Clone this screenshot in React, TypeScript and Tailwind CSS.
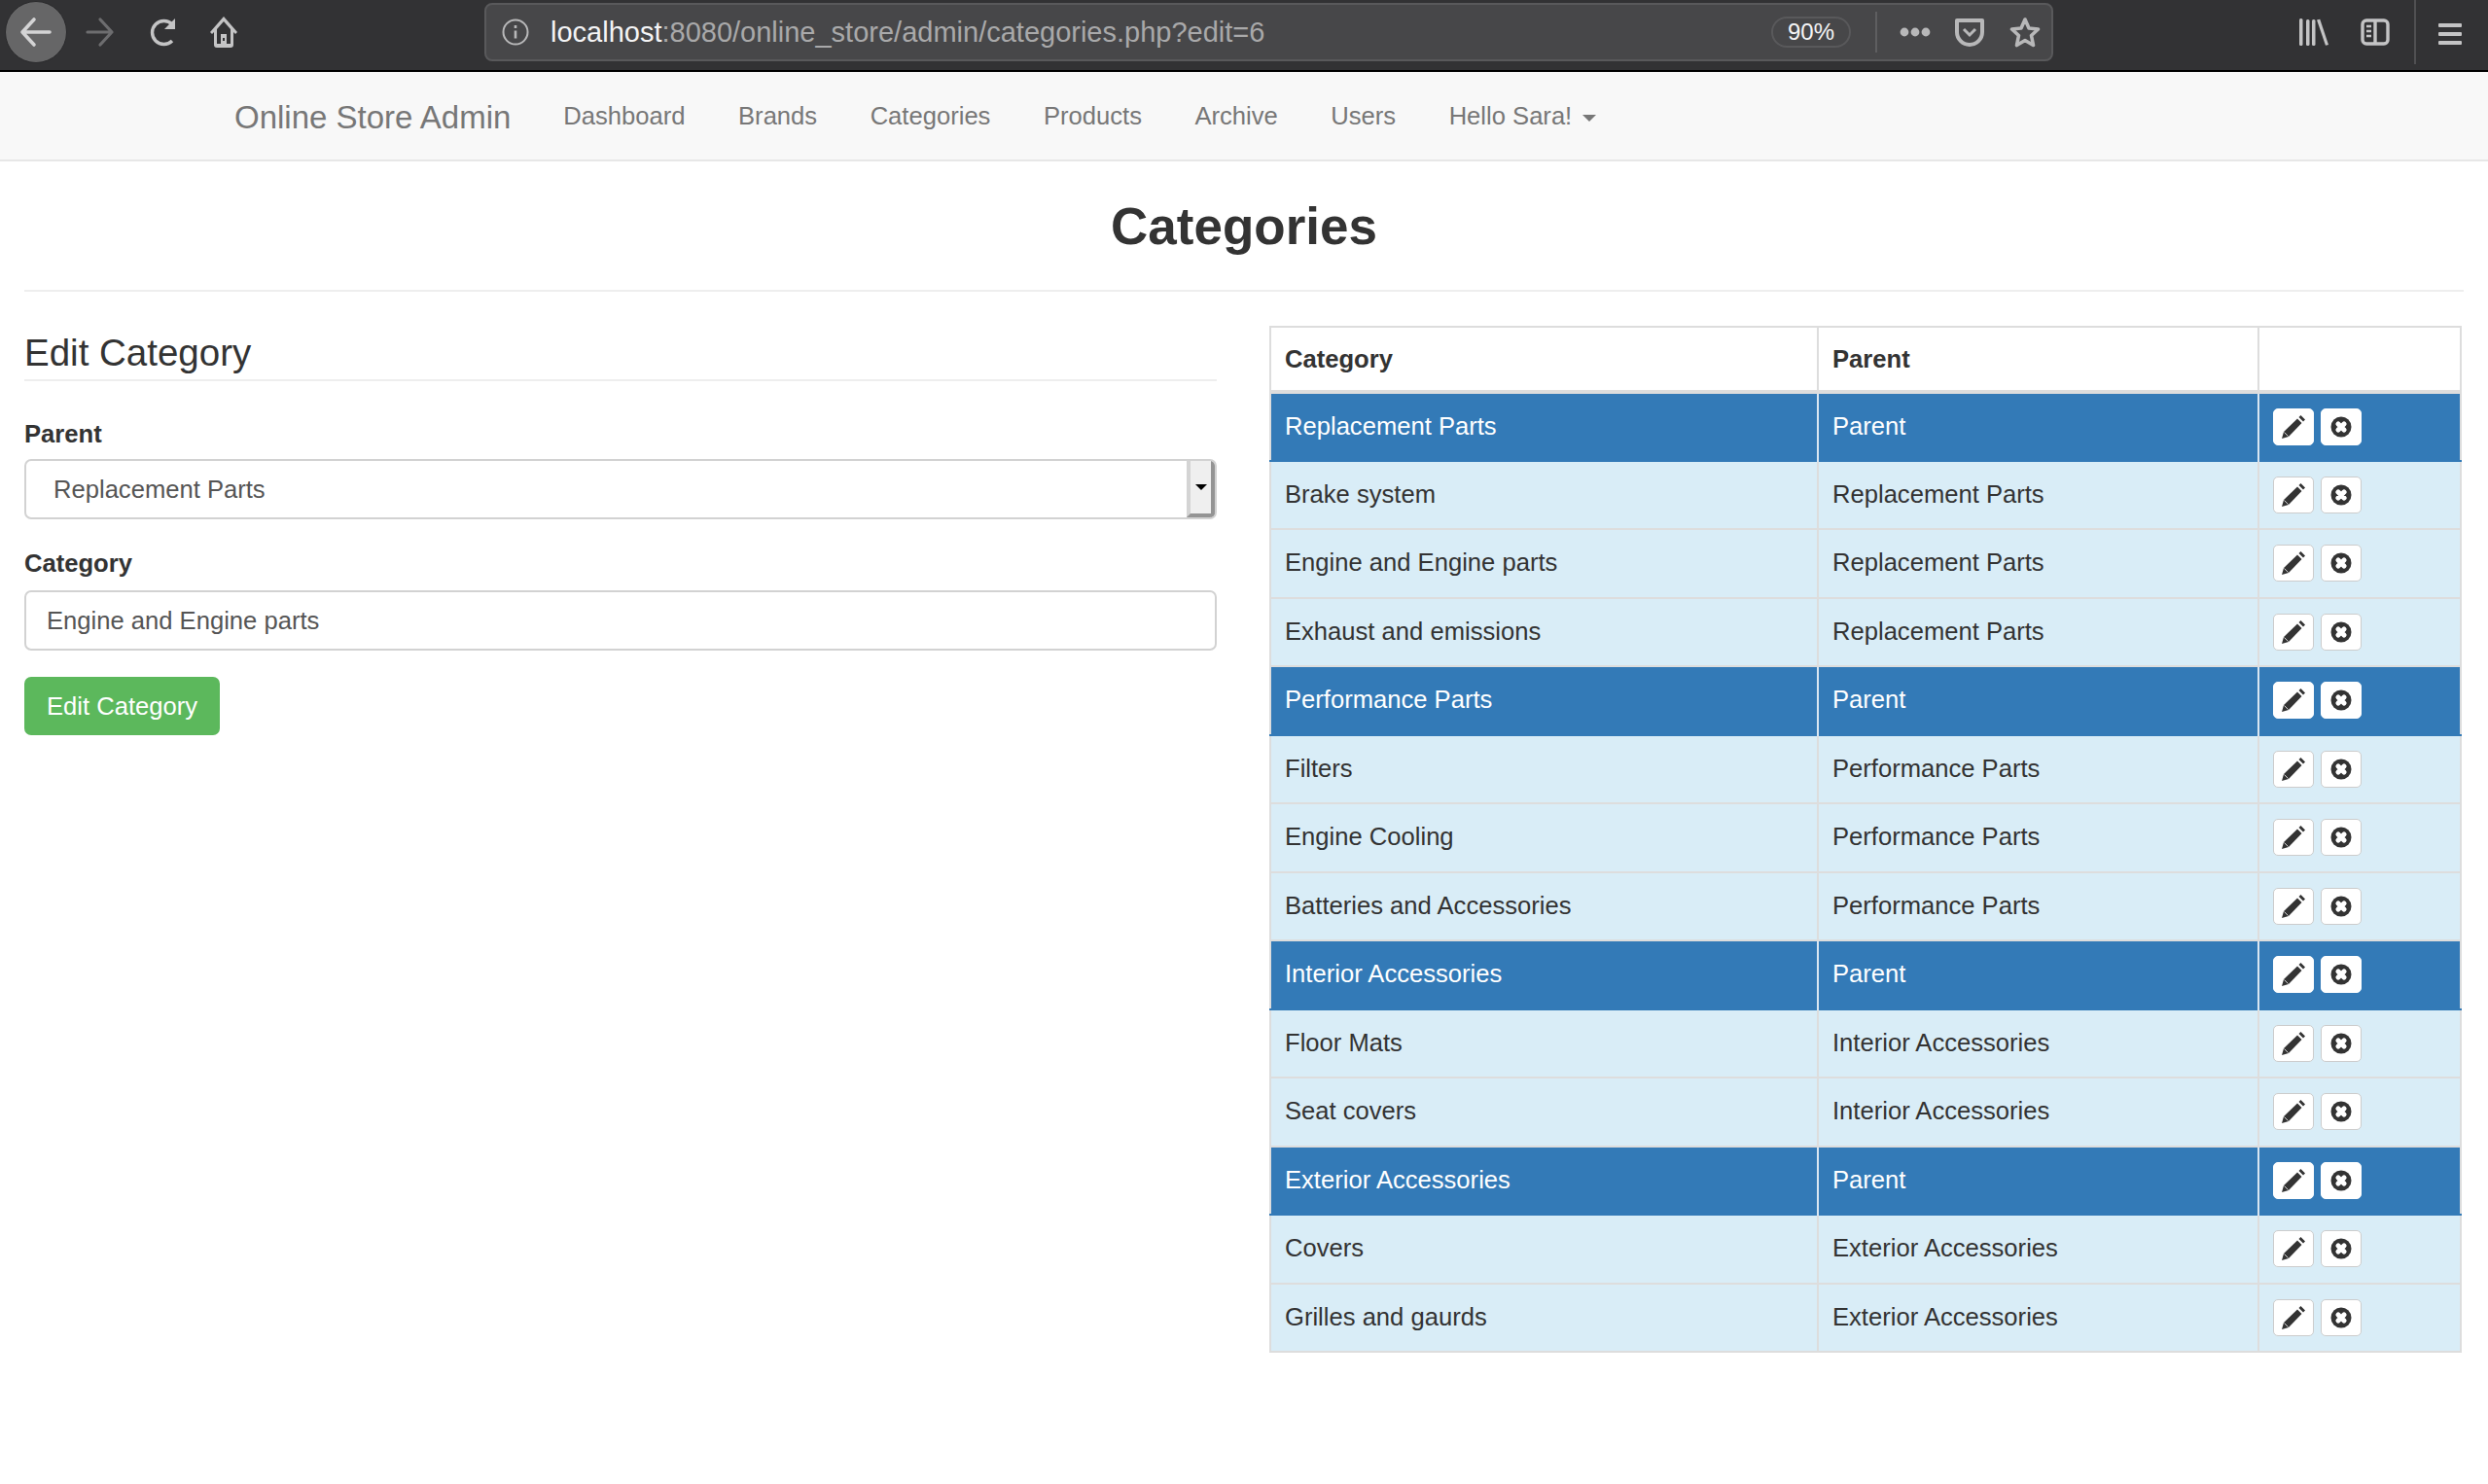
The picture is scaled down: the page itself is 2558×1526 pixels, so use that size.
// App.tsx
const rows = [
  { name: "Replacement Parts", parent: "Parent", top: true },
  { name: "Brake system", parent: "Replacement Parts" },
  { name: "Engine and Engine parts", parent: "Replacement Parts" },
  { name: "Exhaust and emissions", parent: "Replacement Parts" },
  { name: "Performance Parts", parent: "Parent", top: true },
  { name: "Filters", parent: "Performance Parts" },
  { name: "Engine Cooling", parent: "Performance Parts" },
  { name: "Batteries and Accessories", parent: "Performance Parts" },
  { name: "Interior Accessories", parent: "Parent", top: true },
  { name: "Floor Mats", parent: "Interior Accessories" },
  { name: "Seat covers", parent: "Interior Accessories" },
  { name: "Exterior Accessories", parent: "Parent", top: true },
  { name: "Covers", parent: "Exterior Accessories" },
  { name: "Grilles and gaurds", parent: "Exterior Accessories" },
];

const navLinks = ["Dashboard", "Brands", "Categories", "Products", "Archive", "Users"];

function BrowserBar() {
  return (
    <div className="flex h-[74px] items-center border-b-2 border-black bg-[#323234] pb-[6px]">
      {/* Back button */}
      <div className="ml-[5px] flex h-[64px] w-[64px] items-center justify-center rounded-full border border-[#2a2a2c] bg-[#666667]">
        <svg width="36" height="36" viewBox="0 0 36 36" fill="none" stroke="#d4d4d5" strokeWidth="3.6" strokeLinecap="round" strokeLinejoin="round">
          <path d="M4 18h28M16 5L4 18l12 13" />
        </svg>
      </div>
      <svg className="ml-[19px]" width="30" height="34" viewBox="0 0 30 34" fill="none" stroke="#6d6d6f" strokeWidth="3.2" strokeLinecap="round" strokeLinejoin="round">
        <path d="M2 17h25M15 4l12 13-12 13" />
      </svg>
      <svg className="ml-[35px]" width="30" height="32" viewBox="0 0 30 32" fill="none" stroke="#c4c4c5" strokeWidth="3.4">
        <path d="M24 25a12 12 0 1 1 0-17" />
        <path d="M27 2v11H16z" fill="#c4c4c5" stroke="none" />
      </svg>
      <svg className="ml-[33px]" width="28" height="34" viewBox="0 0 28 34" fill="#c4c4c5">
        <path fillRule="evenodd" d="M14 1L0 17l2 2 2-2v13a3 3 0 0 0 3 3h14a3 3 0 0 0 3-3V17l2 2 2-2zM14 6l7 8v15h-4V19h-6v10H7V14zM13 23h2v3h-2z" />
      </svg>

      {/* URL bar */}
      <div className="ml-[254px] flex h-[60px] w-[1613px] shrink-0 items-center rounded-[8px] border-2 border-[#59595b] bg-[#474749] pr-[11px] pl-[15px]">
        <svg width="30" height="30" viewBox="0 0 30 30" fill="none" stroke="#b8b8b9" strokeWidth="2">
          <circle cx="15" cy="15" r="12.5" />
          <path d="M15 13.5v8M15 8v3" strokeWidth="2.6" />
        </svg>
        <div className="ml-[21px] flex-1 text-[29px] leading-none whitespace-nowrap text-[#a9a9aa]">
          <span className="text-[#f4f4f5]">localhost</span>:8080/online_store/admin/categories.php?edit=6
        </div>
        <div className="flex h-[32px] w-[82px] items-center justify-center rounded-full border-2 border-[#59595b] text-[24px] text-[#f4f4f5]">
          90%
        </div>
        <div className="ml-[25px] h-[42px] w-[2px] bg-[#5e5e60]" />
        <svg className="ml-[23px]" width="32" height="10" viewBox="0 0 32 10" fill="#b8b8b9">
          <circle cx="5" cy="5" r="4.4" />
          <circle cx="16" cy="5" r="4.4" />
          <circle cx="27" cy="5" r="4.4" />
        </svg>
        <svg className="ml-[24px]" width="32" height="30" viewBox="0 0 32 30" fill="none" stroke="#b8b8b9">
          <path d="M3 3h26v12a13 13 0 0 1-26 0z" strokeWidth="4" strokeLinejoin="round" />
          <path d="M10 12l6 6 6-6" strokeWidth="3" />
        </svg>
        <svg className="ml-[25px]" width="32" height="32" viewBox="0 0 32 32" fill="none" stroke="#b8b8b9" strokeWidth="3.6" strokeLinejoin="round">
          <path d="M16 3l4 9 9.5 1-7 6.5 2 10-8.500-5-8.500 5 2-10-7-6.500 9.500-1z" />
        </svg>
      </div>

      {/* Right toolbar */}
      <svg className="ml-[253px]" width="30" height="28" viewBox="0 0 30 28" fill="#c4c4c5">
        <rect x="0" y="0" width="3.500" height="28" rx="1.500" />
        <rect x="7" y="1" width="3.500" height="27" rx="1.500" />
        <rect x="13" y="1" width="3.500" height="27" rx="1.500" />
        <path d="M18 1.500l3.200-.8L30 27l-3 .8z" />
      </svg>
      <svg className="ml-[33px]" width="30" height="28" viewBox="0 0 30 28" fill="none" stroke="#c4c4c5" strokeWidth="3.4">
        <rect x="2" y="2" width="26" height="24" rx="4" />
        <path d="M15 2v24" />
        <path d="M6 8h5M6 13h5M6 18h5" strokeWidth="2.4" />
      </svg>
      <div className="ml-auto flex h-[66px] items-center self-start border-l-2 border-[#505052] pr-[27px] pl-[23px]">
        <div className="flex w-[24px] flex-col gap-[5px] pt-[4px]">
          <div className="h-[4px] rounded-[1px] bg-[#c4c4c5]" />
          <div className="h-[4px] rounded-[1px] bg-[#c4c4c5]" />
          <div className="h-[4px] rounded-[1px] bg-[#c4c4c5]" />
        </div>
      </div>
    </div>
  );
}

function Navbar() {
  return (
    <nav className="flex h-[92px] items-center border-b-2 border-[#e7e7e7] bg-[#f8f8f8] pt-[2px] pl-[241px] text-[#777]">
      <span className="text-[33px] leading-none">Online Store Admin</span>
      <div className="ml-[54px] flex items-center gap-[54.500px] text-[25.600px] leading-none">
        {navLinks.map((link) => (
          <span key={link}>{link}</span>
        ))}
        <span className="flex items-center gap-[11px]">
          Hello Sara!
          <span className="mt-[3px] h-0 w-0 border-x-[7px] border-t-[7px] border-x-transparent border-t-[#777]" />
        </span>
      </div>
    </nav>
  );
}

function Pencil() {
  return (
    <svg width="24" height="24" viewBox="0 0 24 24" fill="#333">
      <path d="M0 24l2-7L16 3.500l4.500 4.500L7 22z" />
      <path d="M17.500 2L19.500 0 24 4.500 22 6.500z" />
      <path d="M2.500 17.500L6.500 21.500" stroke="#fff" strokeWidth="0.8" />
    </svg>
  );
}

function RemoveCircle() {
  return (
    <svg width="22" height="22" viewBox="0 0 22 22">
      <circle cx="11" cy="11" r="10.500" fill="#333" />
      <path d="M8 8l6 6M14 8l-6 6" stroke="#fff" strokeWidth="5.200" strokeLinecap="round" />
    </svg>
  );
}

function ActionButton({ children, top }: { children: React.ReactNode; top?: boolean }) {
  return (
    <button
      className={`flex h-[38px] w-[42px] items-center justify-center rounded-[5px] border bg-white ${
        top ? "border-white" : "border-[#ccc]"
      }`}
    >
      {children}
    </button>
  );
}

function CategoryForm() {
  return (
    <div className="w-[1226px] shrink-0">
      <h3 className="h-[57px] border-b-2 border-[#eee] pt-[5px] text-[38.500px] leading-[46px] text-[#333]">Edit Category</h3>
      <label className="mt-[36px] block text-[25.600px] leading-[36px] font-bold text-[#333]">Parent</label>
      <div className="mt-[8px] flex h-[62px] items-stretch justify-between overflow-hidden rounded-[7px] border-2 border-[#d2d2d2] bg-white text-[25.600px] text-[#555]">
        <span className="flex items-center pl-[28px]">Replacement Parts</span>
        <span className="flex w-[29px] items-center justify-center border-r-4 border-b-4 border-l-4 border-r-[#949494] border-b-[#949494] border-l-[#d4d4d4] bg-[#efefef]">
          <span className="h-0 w-0 border-x-[6px] border-t-[6px] border-x-transparent border-t-black" />
        </span>
      </div>
      <label className="mt-[27px] block text-[25.600px] leading-[36px] font-bold text-[#333]">Category</label>
      <div className="mt-[10px] flex h-[62px] items-center rounded-[7px] border-2 border-[#d2d2d2] bg-white pl-[21px] text-[25.600px] text-[#555]">
        Engine and Engine parts
      </div>
      <button className="mt-[27px] flex h-[60px] w-[201px] items-center justify-center rounded-[7px] bg-[#5cb85c] text-[25.600px] text-white">
        Edit Category
      </button>
    </div>
  );
}

function CategoryTable() {
  return (
    <table className="ml-[54px] w-[1226px] table-fixed border-collapse border-2 border-[#ddd] text-[25.600px]">
      <thead>
        <tr className="h-[67px] border-b-[4px] border-[#ddd] text-left font-bold text-[#333]">
          <th className="w-[563px] border-r-2 border-[#ddd] pl-[14px]">Category</th>
          <th className="w-[453px] border-r-2 border-[#ddd] pl-[14px]">Parent</th>
          <th />
        </tr>
      </thead>
      <tbody>
        {rows.map((row) => (
          <tr
            key={row.name}
            className={`h-[70.500px] border-b-2 ${
              row.top ? "border-[#337ab7] bg-[#337ab7] text-white" : "border-[#ddd] bg-[#d9edf7] text-[#333]"
            }`}
          >
            <td className={`border-r-2 pb-[2px] pl-[14px] ${row.top ? "border-[#d9e6f2]" : "border-[#ddd]"}`}>{row.name}</td>
            <td className={`border-r-2 pb-[2px] pl-[14px] ${row.top ? "border-[#d9e6f2]" : "border-[#ddd]"}`}>{row.parent}</td>
            <td className="pl-[14px]">
              <div className="flex gap-[7px]">
                <ActionButton top={row.top}>
                  <Pencil />
                </ActionButton>
                <ActionButton top={row.top}>
                  <RemoveCircle />
                </ActionButton>
              </div>
            </td>
          </tr>
        ))}
      </tbody>
    </table>
  );
}

export default function App() {
  return (
    <div className="min-h-[1526px] bg-white font-['Liberation_Sans',Arial,sans-serif]">
      <BrowserBar />
      <Navbar />
      <main className="px-[25px]">
        <h1 className="h-[134px] border-b-2 border-[#eee] pt-[36px] text-center text-[53px] leading-[62px] font-bold text-[#333]">
          Categories
        </h1>
        <div className="mt-[35px] flex items-start">
          <CategoryForm />
          <CategoryTable />
        </div>
      </main>
    </div>
  );
}
